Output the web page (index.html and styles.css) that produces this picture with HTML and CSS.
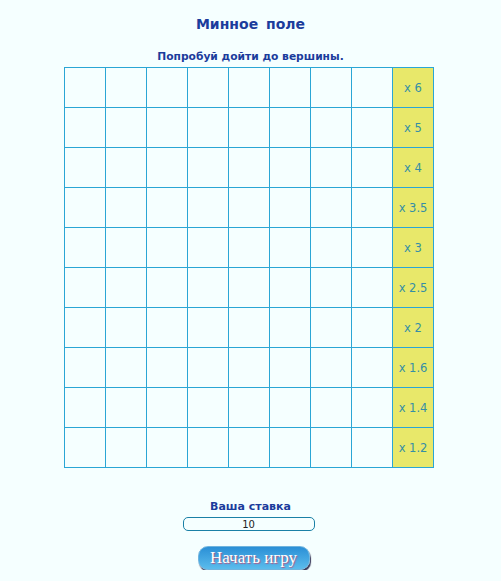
FILE: index.html
```html
<!DOCTYPE html>
<html>
<head>
<meta charset="utf-8">
<link rel="stylesheet" href="styles.css">
</head>
<body>
<div class="page">
  <h1 class="title">Минное поле</h1>
  <p class="hint">Попробуй дойти до вершины.</p>
  <table class="field">
    <tr><td></td><td></td><td></td><td></td><td></td><td></td><td></td><td></td><td class="mult">x 6</td></tr>
    <tr><td></td><td></td><td></td><td></td><td></td><td></td><td></td><td></td><td class="mult">x 5</td></tr>
    <tr><td></td><td></td><td></td><td></td><td></td><td></td><td></td><td></td><td class="mult">x 4</td></tr>
    <tr><td></td><td></td><td></td><td></td><td></td><td></td><td></td><td></td><td class="mult">x 3.5</td></tr>
    <tr><td></td><td></td><td></td><td></td><td></td><td></td><td></td><td></td><td class="mult">x 3</td></tr>
    <tr><td></td><td></td><td></td><td></td><td></td><td></td><td></td><td></td><td class="mult">x 2.5</td></tr>
    <tr><td></td><td></td><td></td><td></td><td></td><td></td><td></td><td></td><td class="mult">x 2</td></tr>
    <tr><td></td><td></td><td></td><td></td><td></td><td></td><td></td><td></td><td class="mult">x 1.6</td></tr>
    <tr><td></td><td></td><td></td><td></td><td></td><td></td><td></td><td></td><td class="mult">x 1.4</td></tr>
    <tr><td></td><td></td><td></td><td></td><td></td><td></td><td></td><td></td><td class="mult">x 1.2</td></tr>
  </table>
  <div class="bet">
    <div class="bet-label">Ваша ставка</div>
    <input class="bet-input" type="text" value="10">
    <button class="start">Начать игру</button>
  </div>
</div>
</body>
</html>
```
FILE: styles.css
```css
html, body {
  margin: 0;
  padding: 0;
  background: #f5ffff;
}
.page {
  width: 501px;
  display: flex;
  flex-direction: column;
  align-items: center;
  font-family: "DejaVu Sans", Verdana, sans-serif;
  color: #1b3c9c;
}
.title {
  margin: 14px 0 0 0;
  font-size: 14px;
  font-weight: bold;
  line-height: 20px;
  word-spacing: 3px;
}
.hint {
  margin: 16px 0 0 0;
  font-size: 10.7px;
  font-weight: bold;
  line-height: 14px;
}
.field {
  margin: 3px 0 0 -3px;
  border-collapse: collapse;
}
.field td {
  width: 40px;
  height: 39px;
  padding: 0;
  border: 1px solid #2aa6d5;
  text-align: center;
  font-size: 11.5px;
  color: #348ea6;
}
.field td.mult {
  background: #e8e86a;
}
.bet {
  margin-top: 32px;
  display: flex;
  flex-direction: column;
  align-items: center;
}
.bet-label {
  font-size: 11px;
  font-weight: bold;
  line-height: 14px;
}
.bet-input {
  margin: 3px 4px 0 0;
  box-sizing: border-box;
  width: 132px;
  height: 14px;
  padding: 0;
  border: 1px solid #1a80a6;
  border-radius: 5px;
  background: #f5ffff;
  text-align: center;
  font-family: "DejaVu Sans", Verdana, sans-serif;
  font-size: 10px;
  color: #222;
  outline: none;
}
.start {
  margin: 15px 0 0 6px;
  width: 112px;
  height: 24px;
  padding: 0;
  border: 1px solid #6fb4de;
  border-radius: 10px;
  background: linear-gradient(#2a8fd6, #5bbcec);
  box-shadow: 1px 2px 1px #3a3a5a;
  font-family: "Liberation Serif", "Times New Roman", serif;
  font-size: 17px;
  color: #ffffff;
  text-shadow: 1px 1px 1px #b05a8a;
}
```
